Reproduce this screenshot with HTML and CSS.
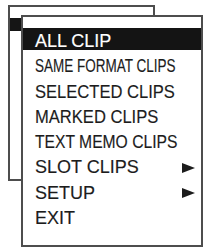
FILE: index.html
```html
<!DOCTYPE html>
<html>
<head>
<meta charset="utf-8">
<link rel="stylesheet" href="styles.css">
</head>
<body>
<div class="desk">
  <div class="win back"><div class="back-bar"></div></div>
  <div class="win front">
    <ul class="menu">
      <li class="item sel"><span class="lbl">ALL CLIP</span></li>
      <li class="item"><span class="lbl sx75">SAME FORMAT CLIPS</span></li>
      <li class="item"><span class="lbl sx92">SELECTED CLIPS</span></li>
      <li class="item"><span class="lbl sx92">MARKED CLIPS</span></li>
      <li class="item"><span class="lbl sx87">TEXT MEMO CLIPS</span></li>
      <li class="item"><span class="lbl">SLOT CLIPS</span><svg class="arrow" viewBox="0 0 13 10" width="13" height="10"><polygon points="0,0 13,5 0,10"/></svg></li>
      <li class="item"><span class="lbl">SETUP</span><svg class="arrow" viewBox="0 0 13 10" width="13" height="10"><polygon points="0,0 13,5 0,10"/></svg></li>
      <li class="item"><span class="lbl">EXIT</span></li>
    </ul>
  </div>
</div>
</body>
</html>
```
FILE: styles.css
```css
html, body {
  margin: 0;
  padding: 0;
  background: #fff;
}
.desk {
  display: grid;
  width: 206px;
  height: 249px;
  font-family: "Liberation Sans", Arial, sans-serif;
  color: #1c1c1c;
}
.win {
  grid-area: 1 / 1;
  box-sizing: border-box;
  border: 2px solid #4d4d4d;
  background: #fff;
  align-self: start;
  justify-self: start;
}
.back {
  margin: 5px 0 0 8px;
  width: 147px;
  height: 176px;
  padding-top: 11px;
}
.back-bar {
  height: 13px;
  background: #151515;
}
.front {
  margin: 15px 0 0 21px;
  width: 182px;
  height: 232px;
  padding-top: 11px;
}
.menu {
  list-style: none;
  margin: 0;
  padding: 0;
}
.item {
  display: flex;
  align-items: center;
  justify-content: space-between;
  height: 25.3px;
  line-height: 25.3px;
  font-size: 18px;
  padding: 0 6px 0 12px;
  white-space: nowrap;
  -webkit-text-stroke: 0.15px currentColor;
}
.item.sel {
  background: #141414;
  color: #fff;
  height: 21px;
  margin-bottom: 4.3px;
  padding-top: 1px;
  align-items: flex-start;
}
.lbl {
  display: inline-block;
  transform-origin: left center;
}
.sx75 { transform: scaleX(0.75); }
.sx87 { transform: scaleX(0.87); }
.sx92 { transform: scaleX(0.92); }
.arrow {
  fill: #1c1c1c;
  flex: none;
}
```
